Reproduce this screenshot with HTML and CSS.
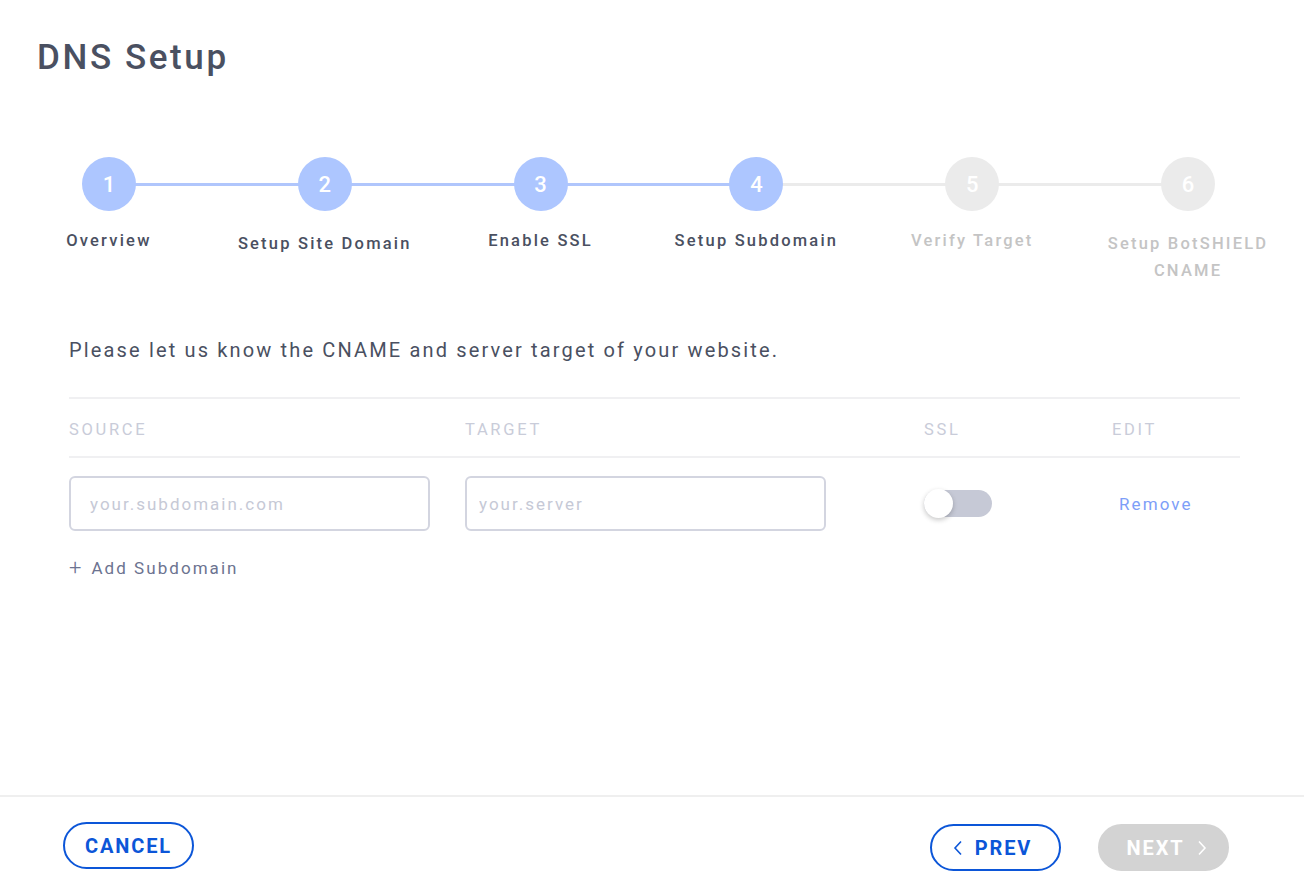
FILE: index.html
```html
<!DOCTYPE html>
<html lang="en">
<head>
<meta charset="utf-8">
<title>DNS Setup</title>
<link rel="stylesheet" href="styles.css">
</head>
<body>
<div class="page">
  <main class="main">
    <h1 class="title">DNS Setup</h1>

    <ol class="stepper">
      <li class="step done"><span class="dot">1</span><span class="label">Overview</span></li>
      <li class="step done"><span class="dot">2</span><span class="label low">Setup Site Domain</span></li>
      <li class="step done"><span class="dot">3</span><span class="label">Enable SSL</span></li>
      <li class="step done"><span class="dot">4</span><span class="label">Setup Subdomain</span></li>
      <li class="step"><span class="dot">5</span><span class="label">Verify Target</span></li>
      <li class="step"><span class="dot">6</span><span class="label low">Setup BotSHIELD CNAME</span></li>
    </ol>

    <section class="content">
      <p class="intro">Please let us know the CNAME and server target of your website.</p>

      <div class="table">
        <div class="row head">
          <div class="cell c-source">SOURCE</div>
          <div class="cell c-target">TARGET</div>
          <div class="cell c-ssl">SSL</div>
          <div class="cell c-edit">EDIT</div>
        </div>
        <div class="row body">
          <div class="cell c-source"><input class="field" type="text" placeholder="your.subdomain.com"></div>
          <div class="cell c-target"><input class="field" type="text" placeholder="your.server"></div>
          <div class="cell c-ssl"><span class="toggle"><span class="knob"></span></span></div>
          <div class="cell c-edit"><a class="remove" href="#">Remove</a></div>
        </div>
      </div>

      <a class="add" href="#"><span class="plus">+</span>Add Subdomain</a>
    </section>
  </main>

  <footer class="footer">
    <button class="btn outline cancel" type="button">CANCEL</button>
    <div class="nav">
      <button class="btn outline prev" type="button">
        <svg width="10" height="16" viewBox="0 0 10 16"><path d="M8 1.5 L2 8 L8 14.5" fill="none" stroke="currentColor" stroke-width="1.6"/></svg>
        PREV
      </button>
      <button class="btn disabled next" type="button">
        NEXT
        <svg width="10" height="16" viewBox="0 0 10 16"><path d="M2 1.5 L8 8 L2 14.5" fill="none" stroke="currentColor" stroke-width="1.6"/></svg>
      </button>
    </div>
  </footer>
</div>
</body>
</html>
```

FILE: styles.css
```css
* { box-sizing: border-box; }

html, body {
  margin: 0;
  padding: 0;
  background: #ffffff;
}

body {
  font-family: Roboto, "Liberation Sans", Arial, sans-serif;
  color: #4a5061;
}

.page {
  width: 1304px;
  height: 894px;
  display: flex;
  flex-direction: column;
}

.main {
  flex: 1;
}

.title {
  margin: 0;
  padding: 36px 0 0 37px;
  font-size: 35px;
  line-height: 44px;
  font-weight: 500;
  letter-spacing: 2.6px;
  color: #4a5061;
}

/* stepper */
.stepper {
  list-style: none;
  margin: 77px 0 0 0;
  padding: 0 8px 0 1px;
  display: grid;
  grid-template-columns: repeat(6, 1fr);
}

.step {
  position: relative;
  display: flex;
  flex-direction: column;
  align-items: center;
  text-align: center;
}

.step + .step::before {
  content: "";
  position: absolute;
  top: 26px;
  left: -50%;
  right: 50%;
  height: 3px;
  background: #ebebeb;
  z-index: 0;
}

.step.done::before {
  background: #b0c6fc;
}

.dot {
  position: relative;
  z-index: 1;
  width: 54px;
  height: 54px;
  border-radius: 50%;
  background: #ebebeb;
  color: #ffffff;
  font-size: 22px;
  font-weight: 500;
  display: flex;
  align-items: center;
  justify-content: center;
}

.step.done .dot {
  background: #adc6ff;
}

.label {
  margin-top: 16px;
  font-size: 16.5px;
  line-height: 27px;
  font-weight: 500;
  letter-spacing: 2.2px;
  color: #4a5061;
  max-width: 196px;
}

.label.low { margin-top: 19px; }

.step:not(.done) .label { color: #c4c4c4; }

/* content */
.content {
  padding: 52px 64px 0 69px;
}

.intro {
  margin: 0;
  font-size: 20px;
  line-height: 28px;
  letter-spacing: 2.15px;
  color: #4a5061;
}

.table {
  margin-top: 33px;
  border-top: 2px solid #f0f0f2;
}

.row {
  display: flex;
  align-items: center;
}

.row.head {
  height: 59px;
  padding-top: 3px;
  border-bottom: 2px solid #f0f0f2;
}

.row.body {
  height: 91px;
}

.cell { flex: none; }
.c-source { width: 396px; }
.c-target { width: 459px; }
.c-ssl { width: 188px; }
.c-edit { width: 128px; }

.head .cell {
  font-size: 16.5px;
  letter-spacing: 2.7px;
  color: #c9ccd9;
}

.field {
  width: 361px;
  height: 55px;
  border: 2px solid #d3d5e0;
  border-radius: 6px;
  padding: 0 19px;
  font-family: inherit;
  font-size: 17px;
  letter-spacing: 2px;
  color: #4a5061;
  outline: none;
  background: #fff;
}

.c-target .field { padding: 0 12px; }

.field::placeholder {
  color: #c6c9d6;
}

.toggle {
  display: block;
  width: 68px;
  height: 27px;
  border-radius: 14px;
  background: #c6c9d6;
  position: relative;
}

.knob {
  position: absolute;
  left: 0;
  top: 0;
  width: 29px;
  height: 29px;
  margin-top: -1px;
  border-radius: 50%;
  background: #ffffff;
  box-shadow: 0 2px 5px rgba(0, 0, 0, 0.22);
}

.remove {
  display: inline-block;
  margin-left: 7px;
  font-size: 17px;
  letter-spacing: 2.1px;
  color: #7d9ef8;
  text-decoration: none;
}

.add {
  display: inline-flex;
  align-items: center;
  margin-top: 6px;
  font-size: 17px;
  letter-spacing: 2.05px;
  color: #6c7390;
  text-decoration: none;
}

.plus {
  font-size: 22px;
  font-weight: 300;
  margin-right: 10px;
  letter-spacing: 0;
}

/* footer */
.footer {
  border-top: 2px solid #efefef;
  height: 99px;
  display: flex;
  align-items: center;
  justify-content: space-between;
  padding: 0 75px 0 63px;
}

.nav {
  display: flex;
  gap: 37px;
  padding-top: 4px;
}

.btn {
  height: 47px;
  width: 131px;
  border-radius: 24px;
  font-family: inherit;
  font-size: 20px;
  font-weight: 700;
  letter-spacing: 1.9px;
  display: inline-flex;
  align-items: center;
  justify-content: center;
  gap: 10px;
  cursor: pointer;
  padding: 0;
}

.btn.outline {
  background: #ffffff;
  border: 2px solid #0c56d8;
  color: #0c56d8;
}

.btn.disabled {
  background: #d3d3d3;
  border: 2px solid #d3d3d3;
  color: #ffffff;
}

.btn.prev { gap: 12px; padding-right: 6px; }
.btn.next { gap: 12px; padding-left: 6px; }
```
